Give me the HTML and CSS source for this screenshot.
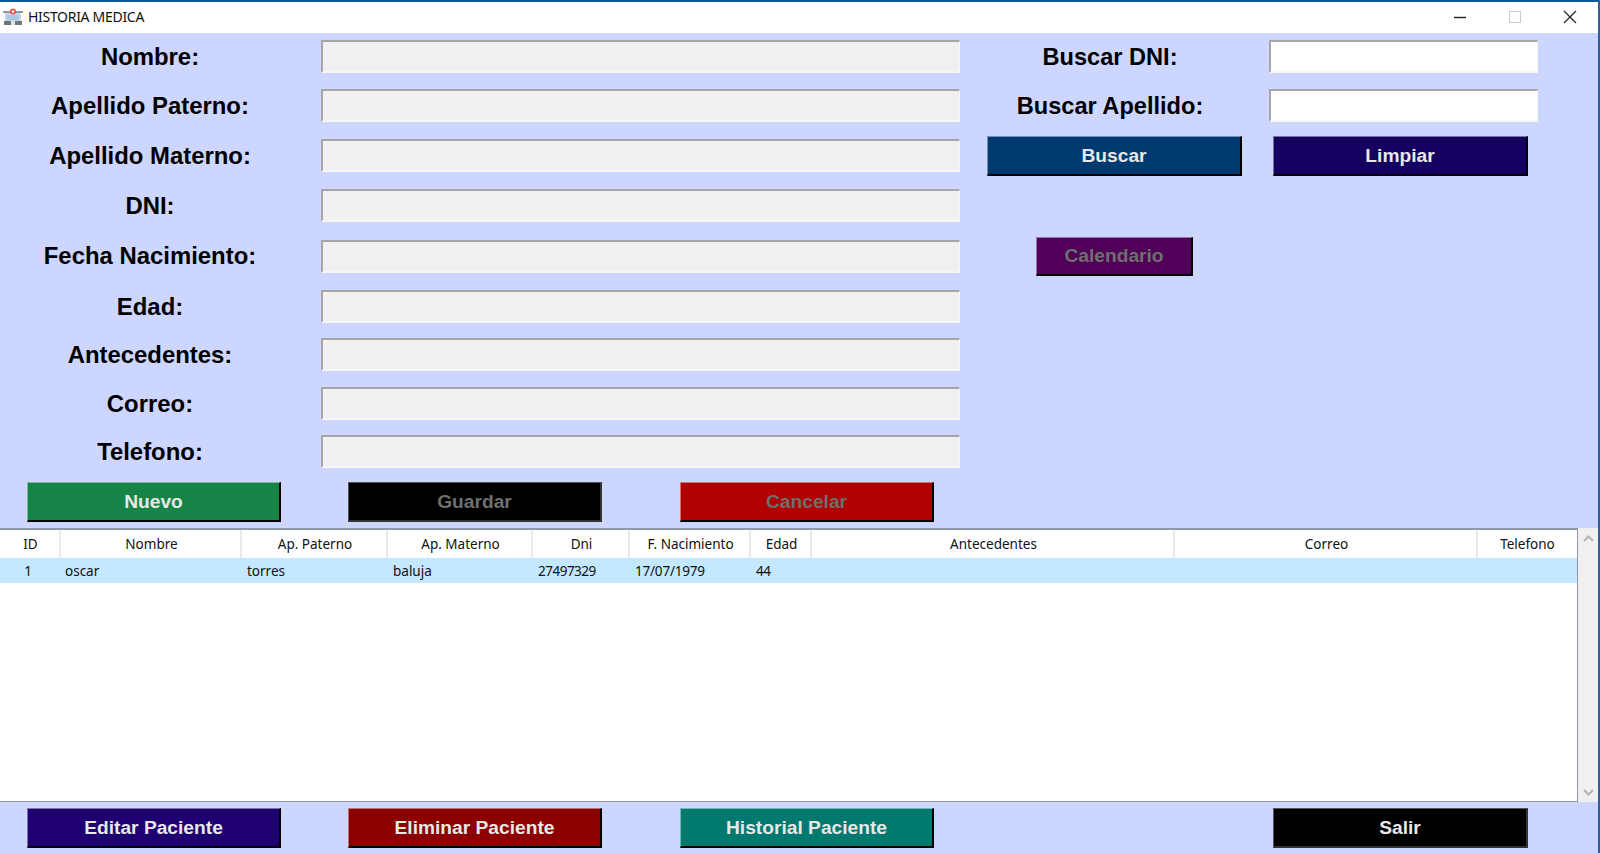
FILE: index.html
```html
<!DOCTYPE html>
<html lang="es">
<head>
<meta charset="utf-8">
<title>HISTORIA MEDICA</title>
<link rel="stylesheet" href="styles.css">
</head>
<body>
<div class="window">
  <header class="titlebar">
    <svg class="app-icon" width="20" height="18" viewBox="0 0 20 18">
      <rect x="2" y="4" width="16" height="13" fill="#c9d6de"/>
      <rect x="0" y="3" width="20" height="2" fill="#8b98a3"/>
      <rect x="4" y="7" width="12" height="5" fill="#a9c8e4"/>
      <rect x="1" y="13" width="18" height="4" fill="#6b7780"/>
      <rect x="8" y="13" width="4" height="4" fill="#dfe6ea"/>
      <circle cx="10" cy="3.5" r="3" fill="#e4574f"/>
      <circle cx="10" cy="3.5" r="1.2" fill="#fff"/>
    </svg>
    <span class="title">HISTORIA MEDICA</span>
    <div class="controls">
      <svg class="ctl" width="55" height="20" viewBox="0 0 55 20"><path d="M21 10.500h12" stroke="#222" stroke-width="1.4"/></svg>
      <svg class="ctl" width="55" height="20" viewBox="0 0 55 20"><rect x="21.500" y="4.500" width="11" height="11" fill="none" stroke="#ccc" stroke-width="1"/></svg>
      <svg class="ctl" width="55" height="20" viewBox="0 0 55 20"><path d="M21 4l12 12M33 4L21 16" stroke="#222" stroke-width="1.2" fill="none"/></svg>
    </div>
  </header>

  <section class="form">
    <label class="lbl r1">Nombre:</label><div class="field"></div>
    <label class="lbl-right">Buscar DNI:</label><div class="field search"></div>

    <label class="lbl r2">Apellido Paterno:</label><div class="field"></div>
    <label class="lbl-right">Buscar Apellido:</label><div class="field search"></div>

    <label class="lbl r3">Apellido Materno:</label><div class="field"></div>
    <button class="btn wide btn-buscar">Buscar</button><button class="btn wide btn-limpiar">Limpiar</button>

    <label class="lbl r4">DNI:</label><div class="field span-rest"></div>

    <label class="lbl r5">Fecha Nacimiento:</label><div class="field"></div>
    <button class="btn btn-cal dis">Calendario</button>

    <label class="lbl r6">Edad:</label><div class="field span-rest"></div>
    <label class="lbl r7">Antecedentes:</label><div class="field span-rest"></div>
    <label class="lbl r8">Correo:</label><div class="field span-rest"></div>
    <label class="lbl r9">Telefono:</label><div class="field span-rest"></div>
  </section>

  <div class="actions actions-top">
    <button class="btn a1 green">Nuevo</button>
    <button class="btn a2 black dis">Guardar</button>
    <button class="btn a3 red dis">Cancelar</button>
  </div>

  <div class="table-wrap">
    <div class="table-box">
      <table class="grid">
        <colgroup>
          <col class="c1"><col class="c2"><col class="c3"><col class="c4"><col class="c5"><col class="c6"><col class="c7"><col class="c8"><col class="c9"><col class="c10">
        </colgroup>
        <thead>
          <tr><th>ID</th><th>Nombre</th><th>Ap. Paterno</th><th>Ap. Materno</th><th>Dni</th><th>F. Nacimiento</th><th>Edad</th><th>Antecedentes</th><th>Correo</th><th>Telefono</th></tr>
        </thead>
        <tbody>
          <tr class="sel"><td class="ctr">1</td><td class="first">oscar</td><td>torres</td><td>baluja</td><td class="num">27497329</td><td class="date">17/07/1979</td><td class="num">44</td><td></td><td></td><td></td></tr>
        </tbody>
      </table>
    </div>
    <div class="scrollbar">
      <svg width="11" height="7" viewBox="0 0 11 7"><path d="M1 6l4.500-4.500L10 6" fill="none" stroke="#b5b5b5" stroke-width="2"/></svg>
      <svg width="11" height="7" viewBox="0 0 11 7"><path d="M1 1l4.500 4.500L10 1" fill="none" stroke="#b5b5b5" stroke-width="2"/></svg>
    </div>
  </div>

  <div class="actions actions-bottom">
    <button class="btn a1 indigo">Editar Paciente</button>
    <button class="btn a2 maroon">Eliminar Paciente</button>
    <button class="btn a3 teal">Historial Paciente</button>
    <button class="btn wide a4 black">Salir</button>
  </div>
</div>
</body>
</html>
```
FILE: styles.css
```css
* { box-sizing: border-box; }
html, body { margin: 0; height: 100%; overflow: hidden; }
.window {
  width: 1600px; height: 853px;
  background: #ccd6ff;
  border-right: 2px solid #2f5f9f;
  display: flex; flex-direction: column;
  font-family: "Liberation Sans", Arial, sans-serif;
}
.titlebar {
  height: 33px; flex: none;
  background: #fff;
  border-top: 2px solid #0b5a9c;
  display: flex; align-items: center;
  padding: 0 0 2px 3px;
  font-family: "Noto Sans", "Open Sans", sans-serif;
}
.app-icon { flex: none; margin-right: 5px; }
.title { font-size: 14px; color: #111; letter-spacing: -0.3px; }
.controls { margin-left: auto; display: flex; }
.ctl { display: block; }

.form {
  height: 449px; flex: none;
  padding-top: 7px;
  display: grid;
  grid-template-columns: 321px 639px 309px 269px;
  grid-template-rows: 49px 50px 50px 51px 50px 48px 49px 48px 33px;
  align-items: start;
}
.lbl, .lbl-right {
  font-weight: 700; color: #000;
  text-align: center;
}
.lbl { grid-column: 1; padding-right: 21px; font-size: 23.900px; line-height: 33px; }
.lbl-right { padding-right: 9px; font-size: 23.600px; line-height: 35px; }
.r5 { margin-top: -1px; }
.field {
  height: 33px;
  background: #f0f0f0;
  border-style: solid;
  border-width: 2px 1px 2px 2px;
  border-color: #a6a6a6 #f6f6f6 #f6f6f6 #a6a6a6;
}
.field.search { background: #fff; }
.span-rest { grid-column: 2; }

.btn {
  display: block;
  height: 40px; width: 254px;
  padding: 0;
  font-family: "Liberation Sans", Arial, sans-serif;
  font-size: 19.200px; font-weight: 700;
  color: #e8e8e8;
  border-style: solid;
  border-width: 1px 2px 2px 1px;
  border-color: rgba(255,255,255,.45) #000 #000 rgba(255,255,255,.45);
  text-align: center;
}
.btn.wide { width: 255px; }
.dis { color: #6f6f6f; }
.btn-buscar { background: #003a70; margin: -3px 0 0 27px; }
.btn-limpiar { background: #14005e; margin: -3px 0 0 4px; }
.btn-cal {
  grid-column: 3 / 5;
  background: #500058;
  width: 157px; height: 39px;
  margin: -3px 0 0 76px;
}

.actions { display: flex; flex: none; padding-left: 27px; }
.actions-top { height: 46px; }
.actions-bottom { height: 51px; padding-top: 6px; }
.a2 { margin-left: 67px; }
.a3 { margin-left: 78px; }
.a4 { margin-left: 339px; }
.green { background: #158446; }
.black { background: #000; border-color: #555 #333 #333 #555; }
.red { background: #b00000; }
.indigo { background: #1f0070; }
.maroon { background: #8c0000; }
.teal { background: #00796f; }

.table-wrap { height: 274px; flex: none; display: flex; }
.table-box {
  width: 1578px; flex: none;
  background: #fff;
  border-top: 2px solid #8e96a8;
  border-bottom: 1px solid #8e96a8;
  border-right: 1px solid #8e96a8;
  font-family: "Noto Sans", "Open Sans", sans-serif;
  font-size: 13.500px; color: #111;
}
.grid { border-collapse: collapse; table-layout: fixed; width: 1577px; }
.c1 { width: 60px; } .c2 { width: 181px; } .c3 { width: 146px; } .c4 { width: 145px; }
.c5 { width: 97px; } .c6 { width: 121px; } .c7 { width: 61px; } .c8 { width: 363px; }
.c9 { width: 303px; } .c10 { width: 100px; }
.grid th {
  height: 28px; padding: 0 0 0 2px;
  font-weight: 400; text-align: center;
  border-right: 2px solid #eaeaea;
}
.grid th:last-child { border-right: 0; padding-left: 0; }
.grid td {
  height: 25px; padding: 0 0 0 6px;
  white-space: nowrap;
}
.grid td.ctr { text-align: center; padding: 0 4px 0 0; }
.grid td.first { padding-left: 5px; }
.grid td.num { letter-spacing: -0.5px; }
.grid td.date { letter-spacing: -0.2px; }
.sel { background: #c4e8ff; }
.scrollbar {
  flex: 1;
  background: #f0f0f0;
  display: flex; flex-direction: column; justify-content: space-between; align-items: center;
  padding: 7px 0 6px;
}
.scrollbar svg { display: block; }
```
